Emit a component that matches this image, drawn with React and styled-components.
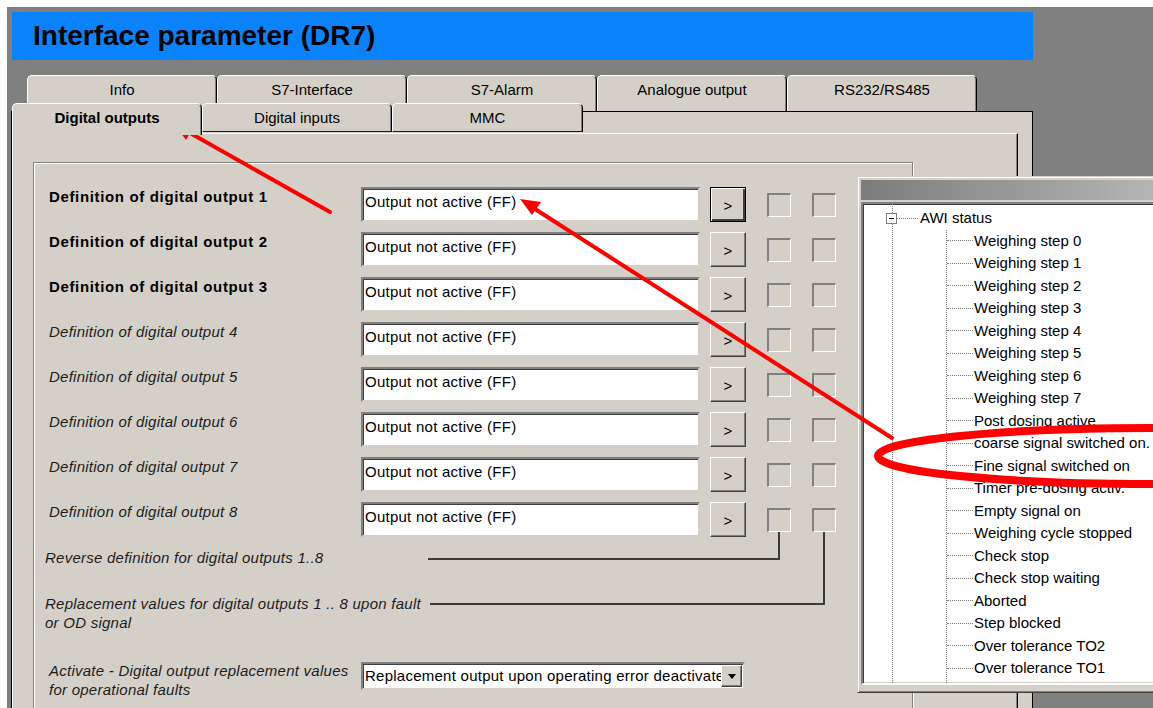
import React from "react";
import styled, { createGlobalStyle } from "styled-components";

const GlobalStyle = createGlobalStyle`
  html, body {
    margin: 0;
    padding: 0;
    background: #ffffff;
  }
  body {
    font-family: "Liberation Sans", Arial, sans-serif;
    color: #000;
  }
`;

const BEIGE = "#d4d0c8";

const Page = styled.div`
  position: relative;
  width: 1153px;
  height: 708px;
  overflow: hidden;
  padding: 7px 0 0 7px;
  box-sizing: border-box;
`;

const Desktop = styled.div`
  position: relative;
  height: 100%;
  background: #808080;
  padding: 5px 0 0 5px;
  box-sizing: border-box;
`;

const TitleBar = styled.div`
  width: 1021px;
  height: 48px;
  background: #0a82fb;
  display: flex;
  align-items: center;
  padding-left: 21px;
  box-sizing: border-box;
  font-size: 28px;
  font-weight: bold;
  color: #000;
`;

const Window = styled.div`
  width: 1022px;
  margin: 15px 0 0 -1px;
  height: 700px;
  display: flex;
  flex-direction: column;
`;

const BackRow = styled.div`
  display: flex;
  height: 36px;
  padding-left: 16px;
`;

const BackTab = styled.div`
  width: 190px;
  height: 36px;
  box-sizing: border-box;
  background: ${BEIGE};
  border-top: 1px solid #fff;
  border-left: 1px solid #fff;
  border-right: 1px solid #000;
  border-radius: 5px 5px 0 0;
  box-shadow: inset -1px 0 #808080;
  text-align: center;
  padding-top: 5px;
  font-size: 15px;
  line-height: 18px;
`;

const Frame = styled.div`
  flex: 1;
  display: flex;
  flex-direction: column;
  background: ${BEIGE};
  border-top: 1px solid #000;
  border-left: 1px solid #000;
  border-right: 1px solid #000;
`;

const FrontRow = styled.div`
  position: relative;
  z-index: 2;
  display: flex;
  align-items: flex-start;
  height: 29px;
  margin-top: -9px;
`;

const FrontTab = styled.div`
  width: ${(p) => p.$w}px;
  height: ${(p) => (p.$active ? 32 : 29)}px;
  margin-bottom: ${(p) => (p.$active ? -3 : 0)}px;
  box-sizing: border-box;
  background: ${BEIGE};
  border-top: 1px solid #fff;
  border-left: 1px solid #fff;
  border-right: 1px solid #000;
  border-bottom: ${(p) => (p.$active ? "none" : "1px solid #1a1a1a")};
  border-radius: 5px 5px 0 0;
  box-shadow: inset -1px 0 #808080;
  text-align: center;
  padding-top: 5px;
  font-size: 15px;
  line-height: 18px;
  font-weight: ${(p) => (p.$active ? "bold" : "normal")};
`;

const TabBody = styled.div`
  flex: 1;
  margin: 1px 14px 0 0;
  border-top: 1px solid #fff;
  border-left: 1px solid #fff;
  border-right: 1px solid #000;
  box-shadow: inset -1px 0 #808080;
  padding: 28px 0 0 20px;
`;

const GroupBox = styled.div`
  width: 880px;
  height: 620px;
  box-sizing: border-box;
  border: 1px solid #808080;
  box-shadow: inset 1px 1px #fff, 1px 1px #fff;
  padding-top: 24px;
`;

const Rows = styled.div`
  display: flex;
  flex-direction: column;
  gap: 10px;
`;

const Row = styled.div`
  display: flex;
  align-items: flex-start;
  height: 35px;
`;

const Label = styled.div`
  width: 327px;
  box-sizing: border-box;
  padding: 1px 0 0 15px;
  font-size: 15px;
  line-height: 18px;
  font-weight: ${(p) => (p.$main ? "bold" : "normal")};
  font-style: ${(p) => (p.$main ? "normal" : "italic")};
  letter-spacing: ${(p) => (p.$main ? "0.65px" : "0.25px")};
  color: ${(p) => (p.$main ? "#000" : "#1c1c1c")};
  white-space: nowrap;
`;

const TextField = styled.div`
  width: 339px;
  height: 35px;
  box-sizing: border-box;
  background: #fff;
  border: 2px solid;
  border-color: #808080 ${BEIGE} ${BEIGE} #808080;
  box-shadow: inset 1px 1px #404040;
  padding: 4px 0 0 2px;
  font-size: 15px;
  line-height: 18px;
  letter-spacing: 0.25px;
  white-space: nowrap;
  overflow: hidden;
`;

const PickButton = styled.div`
  width: 36px;
  height: 35px;
  margin-left: 10px;
  box-sizing: border-box;
  background: ${BEIGE};
  border: 1px solid;
  border-color: ${(p) => (p.$default ? "#000" : "#fff #404040 #404040 #fff")};
  box-shadow: ${(p) =>
    p.$default
      ? "inset 1px 1px #fff, inset -2px -2px #404040"
      : "inset -1px -1px #808080"};
  display: flex;
  align-items: center;
  justify-content: center;
  font-size: 15px;
  padding-top: 2px;
`;

const Check = styled.div`
  width: 24px;
  height: 24px;
  margin: 6px 0 0 21px;
  box-sizing: border-box;
  background: ${BEIGE};
  border-top: 2px solid #808080;
  border-left: 2px solid #808080;
  border-bottom: 1px solid #fff;
  border-right: 1px solid #fff;
`;

const LinkRow = styled.div`
  display: flex;
  align-items: flex-start;
  height: ${(p) => p.$h}px;
  margin-top: ${(p) => p.$top || 0}px;
`;

const Note = styled.div`
  width: 394px;
  box-sizing: border-box;
  padding-left: 11px;
  padding-top: ${(p) => p.$pad || 0}px;
  font-size: 15px;
  line-height: 18.5px;
  font-style: italic;
  letter-spacing: 0.25px;
  color: #1c1c1c;
  white-space: nowrap;
`;

const Leader = styled.div`
  width: ${(p) => p.$w}px;
  height: ${(p) => p.$h}px;
  margin-left: ${(p) => p.$left || 0}px;
  box-sizing: border-box;
  border-right: 2px solid #3a3a3a;
  border-bottom: 2px solid #3a3a3a;
`;

const Riser = styled.div`
  width: 2px;
  height: 100%;
  margin-left: 43px;
  background: #3a3a3a;
`;

const ActivateRow = styled.div`
  display: flex;
  align-items: flex-start;
  margin-top: 31px;
`;

const ActivateLabel = styled.div`
  width: 327px;
  box-sizing: border-box;
  padding-left: 15px;
  margin-top: -1px;
  font-size: 15px;
  line-height: 19px;
  font-style: italic;
  letter-spacing: 0.25px;
  color: #1c1c1c;
  white-space: nowrap;
`;

const Combo = styled.div`
  width: 384px;
  height: 28px;
  box-sizing: border-box;
  display: flex;
  background: #fff;
  border: 2px solid;
  border-color: #808080 ${BEIGE} ${BEIGE} #808080;
  box-shadow: inset 1px 1px #404040;
`;

const ComboText = styled.div`
  flex: 1;
  overflow: hidden;
  white-space: nowrap;
  padding: 3px 0 0 2px;
  font-size: 15px;
  line-height: 18px;
  letter-spacing: 0.25px;
`;

const ComboArrow = styled.div`
  width: 21px;
  height: 22px;
  margin: 1px 1px 0 0;
  box-sizing: border-box;
  background: ${BEIGE};
  border: 1px solid;
  border-color: #fff #404040 #404040 #fff;
  box-shadow: inset -1px -1px #808080;
  display: flex;
  align-items: center;
  justify-content: center;

  &::after {
    content: "";
    border-left: 4px solid transparent;
    border-right: 4px solid transparent;
    border-top: 5px solid #000;
  }
`;

/* floating tree window with the AWI status bits */
const TreeWindow = styled.div`
  position: absolute;
  left: 850px;
  top: 169px;
  width: 320px;
  height: 517px;
  box-sizing: border-box;
  background: ${BEIGE};
  border: 1px solid;
  border-color: ${BEIGE} #404040 #404040 ${BEIGE};
  box-shadow: inset 1px 1px #fff, inset -1px -1px #808080;
  padding: 3px 3px 7px 3px;
  display: flex;
  flex-direction: column;
`;

const TreeCaption = styled.div`
  height: 20px;
  background: linear-gradient(90deg, #7c7c7c, #b8b8b8);
`;

const TreePane = styled.div`
  height: 483px;
  margin-top: 2px;
  box-sizing: border-box;
  background: #fff;
  border: 2px solid;
  border-color: #808080 #fff #fff #808080;
  box-shadow: inset 1px 1px #404040, inset -1px -1px ${BEIGE};
  overflow: hidden;
  display: flex;
`;

const Trunk = styled.div`
  margin-left: 29px;
  padding-top: 3px;
  border-left: 1px dotted #808080;
  display: flex;
  flex-direction: column;
  flex: 1;
`;

const RootRow = styled.div`
  display: flex;
  align-items: center;
  height: 22.5px;
`;

const Toggle = styled.div`
  position: relative;
  width: 11px;
  height: 11px;
  margin-left: -7px;
  box-sizing: border-box;
  border: 1px solid #808080;
  background: #fff;

  &::after {
    content: "";
    position: absolute;
    left: 2px;
    top: 4px;
    width: 5px;
    height: 1px;
    background: #000;
  }
`;

const Stub = styled.div`
  width: ${(p) => p.$w}px;
  border-top: 1px dotted #808080;
`;

const NodeText = styled.span`
  margin-left: ${(p) => p.$gap}px;
  font-size: 15px;
  line-height: 18px;
  white-space: nowrap;
`;

const Branch = styled.div`
  flex: 1;
  margin-left: 53px;
  border-left: 1px dotted #808080;
  display: flex;
  flex-direction: column;
`;

const LeafRow = styled.div`
  display: flex;
  align-items: center;
  height: 22.5px;
`;

const Markup = styled.svg`
  position: absolute;
  left: 0;
  top: 0;
  pointer-events: none;
`;

const backTabs = ["Info", "S7-Interface", "S7-Alarm", "Analogue output", "RS232/RS485"];

const frontTabs = [
  { label: "Digital outputs", w: 190, active: true },
  { label: "Digital inputs", w: 190 },
  { label: "MMC", w: 191 },
];

const outputs = [1, 2, 3, 4, 5, 6, 7, 8];

const statusBits = [
  "Weighing step 0",
  "Weighing step 1",
  "Weighing step 2",
  "Weighing step 3",
  "Weighing step 4",
  "Weighing step 5",
  "Weighing step 6",
  "Weighing step 7",
  "Post dosing active",
  "coarse signal switched on.",
  "Fine signal switched on",
  "Timer pre-dosing activ.",
  "Empty signal on",
  "Weighing cycle stopped",
  "Check stop",
  "Check stop waiting",
  "Aborted",
  "Step blocked",
  "Over tolerance TO2",
  "Over tolerance TO1",
];

function OutputRow({ n }) {
  return (
    <Row>
      <Label $main={n <= 3}>Definition of digital output {n}</Label>
      <TextField>Output not active (FF)</TextField>
      <PickButton $default={n === 1}>&gt;</PickButton>
      <Check />
      <Check />
    </Row>
  );
}

function StatusTree() {
  return (
    <TreeWindow>
      <TreeCaption />
      <TreePane>
        <Trunk>
          <RootRow>
            <Toggle />
            <Stub $w={21} />
            <NodeText $gap={2}>AWI status</NodeText>
          </RootRow>
          <Branch>
            {statusBits.map((bit) => (
              <LeafRow key={bit}>
                <Stub $w={26} />
                <NodeText $gap={1}>{bit}</NodeText>
              </LeafRow>
            ))}
          </Branch>
        </Trunk>
      </TreePane>
    </TreeWindow>
  );
}

export default function App() {
  return (
    <>
      <GlobalStyle />
      <Page>
        <Desktop>
          <TitleBar>Interface parameter (DR7)</TitleBar>
          <Window>
            <BackRow>
              {backTabs.map((t) => (
                <BackTab key={t}>{t}</BackTab>
              ))}
            </BackRow>
            <Frame>
              <FrontRow>
                {frontTabs.map((t) => (
                  <FrontTab key={t.label} $w={t.w} $active={t.active}>
                    {t.label}
                  </FrontTab>
                ))}
              </FrontRow>
              <TabBody>
                <GroupBox>
                  <Rows>
                    {outputs.map((n) => (
                      <OutputRow key={n} n={n} />
                    ))}
                  </Rows>
                  <LinkRow $h={36} $top={-5}>
                    <Note $pad={17}>Reverse definition for digital outputs 1..8</Note>
                    <Leader $w={352} $h={28} />
                    <Riser />
                  </LinkRow>
                  <LinkRow $h={63}>
                    <Note $pad={27}>
                      Replacement values for digital outputs 1 .. 8 upon fault
                      <br />
                      or OD signal
                    </Note>
                    <Leader $w={395} $h={37} $left={2} />
                  </LinkRow>
                  <ActivateRow>
                    <ActivateLabel>
                      Activate - Digital output replacement values
                      <br />
                      for operational faults
                    </ActivateLabel>
                    <Combo>
                      <ComboText>Replacement output upon operating error deactivated</ComboText>
                      <ComboArrow />
                    </Combo>
                  </ActivateRow>
                </GroupBox>
              </TabBody>
            </Frame>
          </Window>
          <StatusTree />
        </Desktop>

        {/* red markup: arrows and the ring around the coarse/fine signal bits */}
        <Markup width="1153" height="708" viewBox="0 0 1153 708">
          <g stroke="#ff0000" strokeWidth="4" strokeLinecap="round" fill="none">
            <line x1="330" y1="212" x2="190" y2="133" />
            <line x1="892" y1="438" x2="535" y2="209" />
          </g>
          <g fill="#ff0000">
            <polygon points="174,124 194,126 186,140" />
            <polygon points="520,199 532,215 541,202" />
          </g>
          <ellipse
            cx="1150"
            cy="456"
            rx="272"
            ry="28"
            fill="none"
            stroke="#ff0000"
            strokeWidth="8"
          />
        </Markup>
      </Page>
    </>
  );
}
